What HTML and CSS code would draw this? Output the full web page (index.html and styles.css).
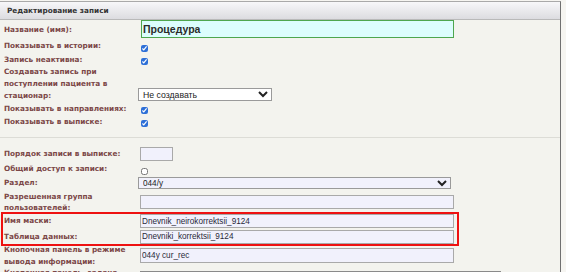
FILE: index.html
```html
<!DOCTYPE html>
<html lang="ru">
<head>
    <meta charset="UTF-8">
    <meta name="viewport" content="width=device-width, initial-scale=1.0">
    <title>Редактирование записи</title>
    <link rel="stylesheet" href="styles.css">
</head>
<body>

    <div class="panel">
        <div class="panel-head">Редактирование записи</div>

        <!-- Основные параметры -->
        <div class="row row-title">
            <label class="lbl" for="name">Название (имя):</label>
            <div class="fld"><input class="txt title" id="name" type="text" value="Процедура"></div>
        </div>
        <div class="row row-check first-check">
            <label class="lbl" for="inHistory">Показывать в истории:</label>
            <div class="fld"><input type="checkbox" id="inHistory" checked></div>
        </div>
        <div class="row row-check">
            <label class="lbl" for="inactive">Запись неактивна:</label>
            <div class="fld"><input type="checkbox" id="inactive" checked></div>
        </div>
        <div class="row row-stat">
            <label class="lbl" for="createMode">Создавать запись при поступлении пациента в стационар:</label>
            <div class="fld">
                <select class="sel sel-white" id="createMode">
                    <option>Не создавать</option>
                    <option>Создавать</option>
                </select>
            </div>
        </div>
        <div class="row row-check">
            <label class="lbl" for="inDirections">Показывать в направлениях:</label>
            <div class="fld"><input type="checkbox" id="inDirections" checked></div>
        </div>
        <div class="row row-check">
            <label class="lbl" for="inExtract">Показывать в выписке:</label>
            <div class="fld"><input type="checkbox" id="inExtract" checked></div>
        </div>

        <hr class="divider">

        <!-- Дополнительные параметры -->
        <div class="row row-order">
            <label class="lbl" for="order">Порядок записи в выписке:</label>
            <div class="fld"><input class="txt short" id="order" type="text" value=""></div>
        </div>
        <div class="row row-shared">
            <label class="lbl" for="shared">Общий доступ к записи:</label>
            <div class="fld"><input type="checkbox" id="shared"></div>
        </div>
        <div class="row row-section">
            <label class="lbl" for="section">Раздел:</label>
            <div class="fld">
                <select class="sel sel-wide" id="section">
                    <option>044/у</option>
                    <option>003/у</option>
                </select>
            </div>
        </div>
        <div class="row row-group">
            <label class="lbl" for="group">Разрешенная группа пользователей:</label>
            <div class="fld"><input class="txt" id="group" type="text" value=""></div>
        </div>

        <div class="mark">
            <div class="row row-mask">
                <label class="lbl" for="mask">Имя маски:</label>
                <div class="fld"><input class="txt" id="mask" type="text" value="Dnevnik_neirokorrektsii_9124"></div>
            </div>
            <div class="row row-table">
                <label class="lbl" for="dataTable">Таблица данных:</label>
                <div class="fld"><input class="txt" id="dataTable" type="text" value="Dnevniki_korrektsii_9124"></div>
            </div>
        </div>

        <div class="row row-panel">
            <label class="lbl" for="btnPanel">Кнопочная панель в режиме вывода информации:</label>
            <div class="fld"><input class="txt" id="btnPanel" type="text" value="044y cur_rec"></div>
        </div>
        <div class="row row-last">
            <label class="lbl" for="btnTask">Кнопочная панель, задача ввода:</label>
            <div class="fld"><textarea class="area" id="btnTask"></textarea></div>
        </div>
    </div>

</body>
</html>
```

FILE: styles.css
```css
body {
    margin: 0;
    background-color: #f6f5f1;
    font-family: "DejaVu Sans", Verdana, sans-serif;
}

.panel {
    width: 560px;
    height: 300px;
    margin-top: 1px;
    border-top: 1px solid #a9a9a9;
    border-right: 1px solid #707070;
    background-color: #f3f3ee;
}

.panel-head {
    height: 17px;
    line-height: 17px;
    padding-left: 7px;
    border-bottom: 1px solid #b9b9b9;
    background: linear-gradient(#f7f7f9, #dcdce0);
    font-size: 7.3px;
    font-weight: bold;
    color: #333;
}

.row {
    display: flex;
    align-items: center;
}

.lbl {
    flex-shrink: 0;
    width: 140px;
    padding-left: 4px;
    padding-right: 6px;
    box-sizing: border-box;
    font-size: 7.3px;
    font-weight: bold;
    line-height: 12px;
    color: #7b4747;
}

.fld {
    flex: 1;
    display: flex;
    align-items: center;
    height: 100%;
}

/* text inputs */
.txt {
    width: 314px;
    height: 14px;
    margin: 0;
    padding: 0 1px;
    box-sizing: border-box;
    border: 1px solid #a9a9a9;
    background-color: #f1f1fc;
    font-family: "Liberation Sans", Arial, sans-serif;
    font-size: 8.2px;
    color: #2a2a3a;
}

.txt.title {
    width: 313px;
    height: 18px;
    margin-left: 1px;
    border: 1px solid #4ea64e;
    background-color: #dcfdfd;
    font-size: 10.5px;
    font-weight: bold;
    color: #2b2b2b;
}

.txt.short {
    width: 33px;
}

.sel {
    margin: 0 0 0 -2px;
    padding: 0;
    box-sizing: border-box;
    border: 1px solid #9a9a9a;
    border-radius: 0;
    font-family: "Liberation Sans", Arial, sans-serif;
    color: #222;
}

.sel-white {
    width: 134px;
    height: 13px;
    background-color: #fff;
    font-size: 8.7px;
}

.sel-wide {
    width: 313px;
    height: 12px;
    background-color: #f1f1fc;
    font-size: 8.2px;
}

input[type="checkbox"] {
    width: 7px;
    height: 7px;
    margin: 0 0 1px 1px;
    accent-color: #2d6fd7;
}

.area {
    width: 361px;
    height: 20px;
    margin: 4px 0 0 0;
    padding: 0;
    box-sizing: border-box;
    border: 1px solid #8a8a8a;
    background-color: #f1f1fc;
    resize: none;
}

/* row heights */
.row-title {
    height: 19px;
}

.row-title .fld {
    align-items: flex-start;
}

.row-check {
    height: 13px;
}

.first-check {
    height: 14px;
}

.row-check .fld,
.row-shared .fld,
.row-stat .fld {
    align-items: flex-end;
}

.row-stat {
    height: 36px;
}

.row-stat .sel {
    margin-bottom: 1px;
}

.divider {
    margin: 9px 0 8px 0;
    border: none;
    border-top: 1px solid #dcdcd6;
}

.row-order {
    height: 16px;
}

.row-shared {
    height: 14px;
}

.row-section {
    height: 14px;
}

.row-group {
    height: 23px;
}

.row-group .lbl {
    line-height: 11px;
}

.row-mask {
    height: 16px;
}

.row-table {
    height: 15px;
}

.row-panel {
    height: 23px;
}

.row-panel .lbl {
    line-height: 11.5px;
}

.row-panel .txt {
    height: 15px;
}

.row-last {
    height: 30px;
    align-items: flex-start;
}

.row-last .fld {
    align-items: flex-start;
}

/* highlighted block */
.mark {
    position: relative;
}

.mark::after {
    content: "";
    position: absolute;
    top: -1px;
    left: 1px;
    width: 458px;
    height: 34px;
    box-sizing: border-box;
    border: 2px solid #ee1111;
    pointer-events: none;
}
```
